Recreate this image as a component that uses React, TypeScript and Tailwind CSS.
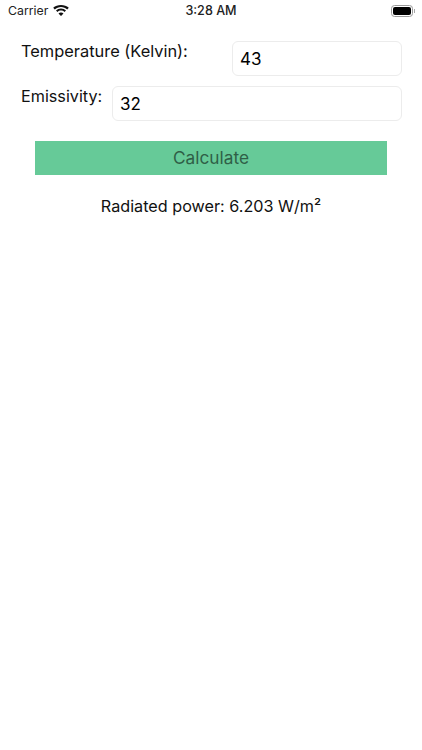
const font = { fontFamily: "Inter, 'Liberation Sans', sans-serif" };

function Wifi() {
  return (
    <svg width="16" height="12" viewBox="0 0 16 12" fill="#111">
      <path d="M8 1.900c2.400 0 4.600.9 6.200 2.500L15.800 2.800C13.700.8 11 0 8 0S2.300.8.200 2.800l1.600 1.600C3.400 2.800 5.600 1.900 8 1.900z" />
      <path d="M8 5.600c1.300 0 2.500.5 3.500 1.400l1.500-1.600C11.700 4.200 9.900 3.400 8 3.400s-3.700.8-5 2L4.500 7c1-.9 2.200-1.400 3.500-1.400z" />
      <path d="M8 7.400c-1 0-1.800.3-2.500 1L8 11l2.500-2.600c-.7-.7-1.500-1-2.500-1z" />
    </svg>
  );
}

function Battery() {
  return (
    <div className="flex items-center gap-[1px]">
      <div className="w-[22px] h-[12px] rounded-[3.5px] border border-[#9a9a9a] p-[1px]">
        <div className="w-full h-full rounded-[2px] bg-black" />
      </div>
      <div className="w-[1px] h-[4px] bg-[#a8a8a8]" />
    </div>
  );
}

export default function App() {
  return (
    <div className="w-[422px] h-[750px] bg-white text-black flex flex-col" style={font}>
      <div className="h-[22px] pl-[8px] pr-[7px] flex items-center justify-between relative text-[12.3px] text-[#222]">
        <div className="flex items-center gap-[5px]">
          <span>Carrier</span>
          <Wifi />
        </div>
        <span className="absolute left-0 right-0 text-center font-medium text-[12.6px]">3:28 AM</span>
        <Battery />
      </div>
      <div className="pt-[19px] pl-[21px] pr-[20px] flex flex-col gap-[10px]">
        <div className="flex items-start">
          <label className="text-[16.4px] leading-[21px] text-[#111] w-[211px] shrink-0">Temperature (Kelvin):</label>
          <input readOnly value="43" className="flex-1 min-w-0 h-[35px] rounded-[6px] border border-[#ececec] px-[7px] text-[17px] text-black outline-none" />
        </div>
        <div className="flex items-start">
          <label className="text-[16.2px] leading-[21px] text-[#111] w-[91px] shrink-0">Emissivity:</label>
          <input readOnly value="32" className="flex-1 min-w-0 h-[35px] rounded-[6px] border border-[#ececec] px-[7px] text-[17px] text-black outline-none" />
        </div>
      </div>
      <button className="mt-[20px] mx-[35px] h-[34px] bg-[#66ca98] text-[#2f5f47] text-[17.300px] flex items-center justify-center">
        Calculate
      </button>
      <p className="mt-[20px] text-center text-[16.2px] leading-[22px] text-[#111]">Radiated power: 6.203 W/m²</p>
    </div>
  );
}
